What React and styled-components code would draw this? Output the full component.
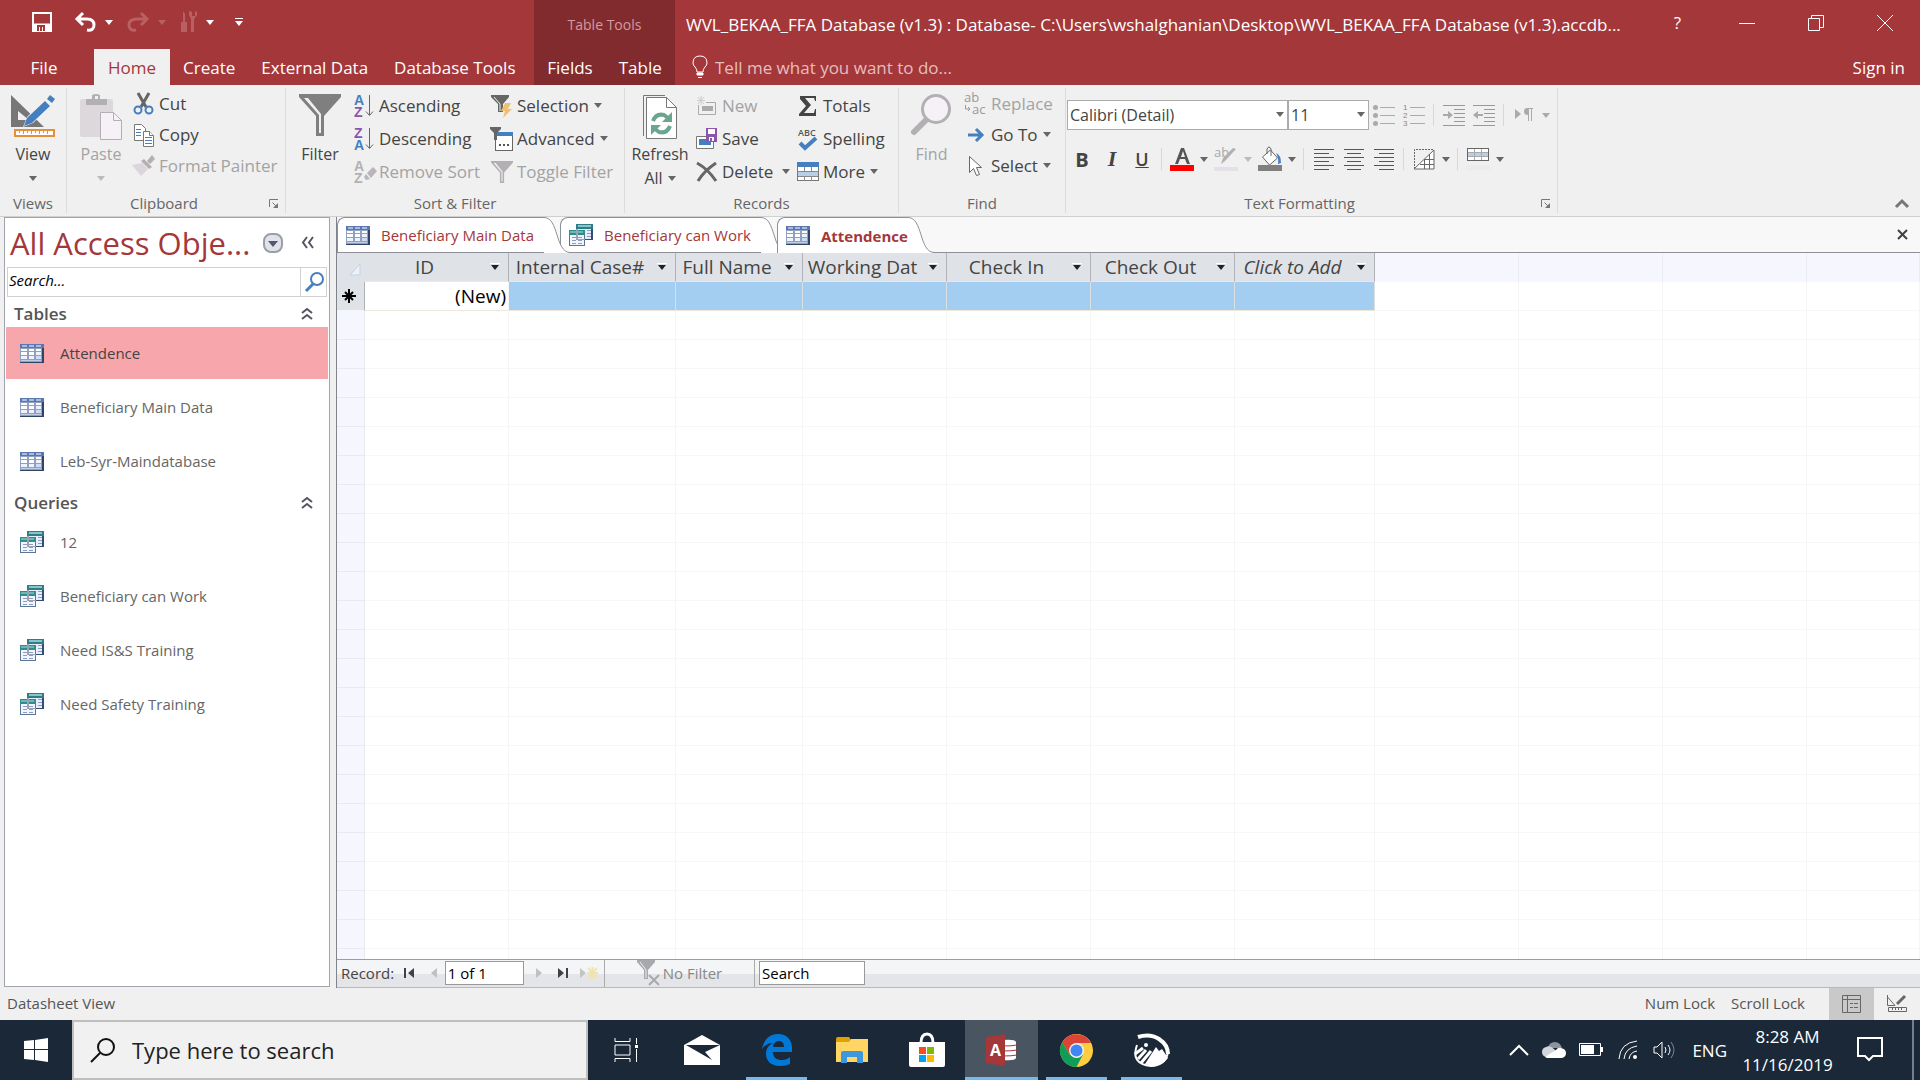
import styled, { createGlobalStyle } from "styled-components";

const GlobalStyle = createGlobalStyle`
  * {
    box-sizing: border-box;
  }
  body {
    margin: 0;
    font-family: "Open Sans", "Noto Sans", sans-serif;
    font-size: 17px;
    color: #444;
    background: #f0f0f0;
  }
  button, input, select {
    font: inherit;
    color: inherit;
  }
  button {
    background: none;
    border: 0;
    padding: 0;
    white-space: nowrap;
  }
  svg {
    display: block;
    flex: none;
    overflow: visible;
  }
`;

// DATA
const COLUMNS = [
  { name: "ID", width: 144 },
  { name: "Internal Case#", width: 167 },
  { name: "Full Name", width: 127 },
  { name: "Working Dat", width: 144 },
  { name: "Check In", width: 144 },
  { name: "Check Out", width: 144 },
  { name: "Click to Add", width: 140, italic: true },
];
const SPARE_COLUMNS = [144, 144, 144];
const EMPTY_ROWS = 40;

const TABLES = ["Attendence", "Beneficiary Main Data", "Leb-Syr-Maindatabase"];
const QUERIES = [
  "12",
  "Beneficiary can Work",
  "Need IS&S Training",
  "Need Safety Training",
];

// SMALL SHARED ICONS
const Caret = ({ color = "#666" }) => (
  <svg width="8" height="5" viewBox="0 0 8 5">
    <path d="M0 0h8L4 5z" fill={color} />
  </svg>
);

const TableIcon = () => (
  <svg width="24" height="19" viewBox="0 0 24 19">
    <rect width="24" height="19" fill="#8ea0c4" />
    <path d="M0 0h24v4H0z" fill="#5b77ad" />
    <path d="M2 1h5v2H2zM9 1h5v2H9zM16 1h5v2h-5z" fill="#a9bbdf" />
    <path d="M1 5h6v2H1zM9 5h5v2H9zM16 5h5v2h-5zM1 8h6v3H1zM9 8h5v3H9z" fill="#fff" />
    <path d="M16 8h5v3h-5zM1 12h6v3H1zM9 12h5v3H9z" fill="#eef3fc" />
    <path d="M16 12h5v3h-5z" fill="#cddcf7" />
    <path d="M1 16h20v1H1z" fill="#c2cddf" />
    <path d="M22 4h2v15H0v-1h22z" fill="#2f4468" />
  </svg>
);

const QueryIcon = () => (
  <svg width="24" height="22" viewBox="0 0 24 22">
    <rect x="7" width="17" height="16" fill="#2f4f74" />
    <rect x="7" width="17" height="5" fill="#2f7d87" />
    <rect x="9" y="1" width="13" height="2" fill="#86c6cb" />
    <rect x="8" y="5" width="14" height="10" fill="#e8eefa" />
    <path d="M18 6h4v1h-4zM18 9h4v1h-4zM18 12h4v1h-4z" fill="#8f9cc0" />
    <rect y="6" width="16" height="16" fill="#5a7697" />
    <rect y="6" width="16" height="5" fill="#2f8d8c" />
    <rect x="1" y="7" width="13" height="2" fill="#6fb5b8" />
    <rect x="1" y="11" width="14" height="10" fill="#f1f5fd" />
    <path d="M3 13h4v1H3zM9 13h4v1H9zM3 16h4v1H3zM9 16h4v1H9zM3 19h4v1H3zM9 19h4v1H9z" fill="#8f9cc0" />
    <path d="M7 5h2v10h7v1H7z" fill="#9aa3b4" />
  </svg>
);

const Launcher = () => (
  <svg width="10" height="10" viewBox="0 0 10 10" fill="none" stroke="#777">
    <path d="M.5 8V.5H9M3.500 3.500l4 4" />
    <path d="M9 4v5H4z" fill="#777" stroke="none" />
  </svg>
);

const DoubleUp = () => (
  <svg width="12" height="14" viewBox="0 0 12 14" fill="none" stroke="#54555f" strokeWidth="2">
    <path d="M1 6l5-4 5 4M1 12l5-4 5 4" />
  </svg>
);

const Funnel = ({ size = 22, color = "#666", shine = "#f0f0f0" }) => (
  <svg width={size} height={size} viewBox="0 0 42 42">
    <path d="M0 0h42v3L25 22v20h-8V22L0 3z" fill={color} />
    <path d="M5 4l15 17v18h2V20L9 4z" fill={shine} />
  </svg>
);

const Lines = ({ rows, color = "#555", children }) => (
  <svg width="22" height="22" viewBox="0 0 22 22">
    {rows.map(([x, w], i) => (
      <rect key={i} x={x} y={i * 4 + 1} width={w} height="1" fill={color} />
    ))}
    {children}
  </svg>
);

const SortIcon = ({ first, second, c1, c2, arrow }) => (
  <svg width="22" height="24" viewBox="0 0 22 24">
    <g fontFamily="Liberation Sans, sans-serif" fontSize="14" fontWeight="700">
      <text x="1" y="11" fill={c1}>{first}</text>
      <text x="1" y="23" fill={c2}>{second}</text>
    </g>
    {arrow ? (
      <path d="M16.500 1v20M13 17.500l3.500 4 3.500-4" fill="none" stroke="#666" />
    ) : (
      <path d="M14 13l6-6 4 4-6 7zM13 14l4 5-4 1-2-3z" fill="#b9b5ba" />
    )}
  </svg>
);

// RIBBON
const BigTool = ({ icon, label, second, caret, disabled, $width }) => (
  <BigButton $width={$width} disabled={disabled}>
    <BigIcon>{icon}</BigIcon>
    <BigLabel>{label}</BigLabel>
    <BigLabel>
      {second}
      {caret && <Caret color={disabled ? "#bbb" : "#666"} />}
    </BigLabel>
  </BigButton>
);

const Tool = ({ icon, label, caret, wide, disabled }) => (
  <ToolButton disabled={disabled}>
    <ToolIcon>{icon}</ToolIcon>
    {label}
    {caret && (
      <ToolCaret $wide={wide}>
        <Caret />
      </ToolCaret>
    )}
  </ToolButton>
);

const Ribbon = () => (
  <RibbonBar>
    <Group $width={67}>
      <GroupBody>
        <BigTool
          $width={66}
          label="View"
          caret
          icon={
            <svg width="44" height="44" viewBox="0 0 44 44">
              <path d="M0 1l33 32H0zM7 17v9h11z" fill="#777" fillRule="evenodd" />
              <path d="M12 33l4-10L36 3l7 6-21 20z" fill="#f0f0f0" />
              <path d="M13 32l3-8L34 7l5 5-18 17zM36 5l3-4 5 4-3 4z" fill="#447fbf" />
              <path d="M4 36h39v6H4z" fill="#fff" stroke="#e58e3c" strokeWidth="2" />
              <path d="M8.500 37v2M12.500 37v3M16.500 37v2M20.500 37v3M24.500 37v2M28.500 37v3M32.500 37v2M36.500 37v3" stroke="#e58e3c" />
            </svg>
          }
        />
      </GroupBody>
      <GroupLabel>Views</GroupLabel>
    </Group>

    <Group $width={219}>
      <GroupBody $pad={3}>
        <BigTool
          $width={62}
          label="Paste"
          caret
          disabled
          icon={
            <svg width="42" height="46" viewBox="0 0 42 46">
              <rect y="5" width="33" height="38" rx="2" fill="#dcd8dc" />
              <path d="M6 5h6V1q4-2 8 0v4h7v6H6z" fill="#b3b0b3" />
              <path d="M15 2h3v3h-3z" fill="#f0f0f0" />
              <path d="M20.500 18.500h13l8 8v19h-21z" fill="#f6f1f7" stroke="#b3b0b3" />
              <path d="M33.500 18.500v8h8" fill="none" stroke="#b3b0b3" />
            </svg>
          }
        />
        <Stack $row={31} $width={150}>
          <Tool
            label="Cut"
            icon={
              <svg width="22" height="24" viewBox="0 0 22 24" fill="none">
                <path d="M5 1l8 14M16 1L8 15" stroke="#666" strokeWidth="3" />
                <circle cx="5" cy="18" r="3.500" stroke="#447fbf" strokeWidth="2" />
                <circle cx="16" cy="18" r="3.500" stroke="#447fbf" strokeWidth="2" />
              </svg>
            }
          />
          <Tool
            label="Copy"
            icon={
              <svg width="22" height="24" viewBox="0 0 22 24" fill="#fff" stroke="#777">
                <path d="M1.500 1.500h7l4 4v12h-11z" />
                <path d="M3 6.500h5M3 9.500h5M3 12.500h5" stroke="#447fbf" />
                <path d="M10.500 8.500h6l4 4v11h-10z" />
                <path d="M16.500 8.500v4h4" />
                <path d="M12 14.500h7M12 17.500h7M12 20.500h7" stroke="#447fbf" />
              </svg>
            }
          />
          <Tool
            label="Format Painter"
            disabled
            icon={
              <svg width="24" height="22" viewBox="0 0 24 22">
                <path d="M0 10l10-2 6 6-7 7z" fill="#dcd6dc" />
                <path d="M9 6l3-2 8 8-3 2zM15 6l5-6 3 4-5 5z" fill="#b3b0b3" />
              </svg>
            }
          />
        </Stack>
      </GroupBody>
      <GroupLabel $launch>
        Clipboard
        <LaunchButton aria-label="Clipboard options"><Launcher /></LaunchButton>
      </GroupLabel>
    </Group>

    <Group $width={339}>
      <GroupBody $pad={2}>
        <BigTool $width={64} label="Filter" icon={<Funnel size={42} color="#7f7f7f" />} />
        <Stack $row={33} $width={138}>
          <Tool label="Ascending" icon={<SortIcon first="A" second="Z" c1="#447fbf" c2="#8a56ab" arrow />} />
          <Tool label="Descending" icon={<SortIcon first="Z" second="A" c1="#8a56ab" c2="#447fbf" arrow />} />
          <Tool label="Remove Sort" disabled icon={<SortIcon first="A" second="Z" c1="#b3b0b3" c2="#b3b0b3" />} />
        </Stack>
        <Stack $row={33} $width={130}>
          <Tool
            label="Selection"
            caret
            icon={
              <svg width="22" height="24" viewBox="0 0 22 24">
                <path d="M0 1h18v2l-6 7v8H7v-8L0 3z" fill="#666" />
                <path d="M3 3l6 7v7" stroke="#f0f0f0" fill="none" />
                <path d="M14 9h6l-3 6h4l-9 9 2-7h-4z" fill="#f0c070" />
              </svg>
            }
          />
          <Tool
            label="Advanced"
            caret
            icon={
              <svg width="24" height="24" viewBox="0 0 24 24">
                <rect x="5.500" y="6.500" width="17" height="17" fill="#fff" stroke="#666" />
                <path d="M6 5h17v4H6z" fill="#447fbf" />
                <path d="M0 0h11v2L7 6v7H4V6L0 2z" fill="#666" />
                <path d="M9 17h2v2H9zM13 17h2v2h-2zM17 17h2v2h-2z" fill="#555" />
              </svg>
            }
          />
          <Tool label="Toggle Filter" disabled icon={<Funnel color="#b3b0b3" />} />
        </Stack>
      </GroupBody>
      <GroupLabel>Sort &amp; Filter</GroupLabel>
    </Group>

    <Group $width={274}>
      <GroupBody>
        <BigTool
          $width={70}
          label="Refresh"
          second="All"
          caret
          icon={
            <svg width="34" height="46" viewBox="0 0 34 46">
              <path d="M.5 42V1.500H22" fill="none" stroke="#777" />
              <path d="M3.500 3.500h20l10 10v31h-30z" fill="#fff" stroke="#777" />
              <path d="M23.500 3.500v10h10" fill="none" stroke="#777" />
              <path d="M10 27q3-8 11-6l4 3" fill="none" stroke="#6aa68f" strokeWidth="4" />
              <path d="M29 18v10H19z" fill="#6aa68f" />
              <path d="M27 32q-3 8-11 6l-4-3" fill="none" stroke="#6aa68f" strokeWidth="4" />
              <path d="M8 41V31h10z" fill="#6aa68f" />
            </svg>
          }
        />
        <Stack $row={33} $width={101}>
          <Tool
            label="New"
            disabled
            icon={
              <svg width="22" height="20" viewBox="0 0 22 20">
                <path d="M2.500 9v9.500h17v-12H10" fill="none" stroke="#aaa" />
                <path d="M6 10h11v5H6z" fill="#aaa" />
                <path d="M5 0v9M1 4.500h8M2 1l6 7M8 1L2 8" stroke="#ccc" />
              </svg>
            }
          />
          <Tool
            label="Save"
            icon={
              <svg width="24" height="24" viewBox="0 0 24 24">
                <path d="M1.500 9.500h17v12h-17z" fill="#fff" stroke="#777" />
                <path d="M4 12h12v6H4z" fill="#447fbf" />
                <path d="M11 1h11v14H11z" fill="#8a56ab" />
                <path d="M13 2h7v5h-7zM14 10h5v4h-5z" fill="#fff" />
                <path d="M15 11h2v3h-2z" fill="#8a56ab" />
              </svg>
            }
          />
          <Tool
            label="Delete"
            caret
            wide
            icon={
              <svg width="22" height="20" viewBox="0 0 22 20" fill="none" stroke="#666" strokeWidth="3">
                <path d="M1 1q11 6 19 18M20 1Q8 9 2 19" />
              </svg>
            }
          />
        </Stack>
        <Stack $row={33} $width={98}>
          <Tool
            label="Totals"
            icon={
              <svg width="20" height="20" viewBox="0 0 20 20">
                <path d="M2 0h16v5h-1l-1-3H7l6 7-7 8h10l1-4h1v7H1v-2l7-8-6-7z" fill="#444" />
              </svg>
            }
          />
          <Tool
            label="Spelling"
            icon={
              <svg width="22" height="24" viewBox="0 0 22 24">
                <text x="1" y="9" fontSize="9" fontWeight="600" fill="#555">ABC</text>
                <path d="M3 16l5 5L19 11" fill="none" stroke="#447fbf" strokeWidth="4" />
              </svg>
            }
          />
          <Tool
            label="More"
            icon={
              <svg width="22" height="20" viewBox="0 0 22 20">
                <rect x=".5" y=".5" width="21" height="18" fill="#fff" stroke="#777" />
                <path d="M0 0h22v5H0z" fill="#447fbf" />
                <path d="M1 9h20v5H1z" fill="#b9cfe8" />
                <path d="M7.500 5v4M14.500 5v4M7.500 14v5M14.500 14v5M1 9.500h20M1 14.500h20" stroke="#888" />
              </svg>
            }
            caret
          />
        </Stack>
      </GroupBody>
      <GroupLabel>Records</GroupLabel>
    </Group>

    <Group $width={167}>
      <GroupBody>
        <BigTool
          $width={65}
          label="Find"
          disabled
          icon={
            <svg width="42" height="42" viewBox="0 0 42 42">
              <path d="M3 38l13-13" stroke="#b3b0b3" strokeWidth="6" strokeLinecap="round" />
              <circle cx="25" cy="15" r="13.500" fill="#f6f1f7" stroke="#b3b0b3" strokeWidth="3" />
            </svg>
          }
        />
        <Stack $row={31} $width={100}>
          <Tool
            label="Replace"
            disabled
            icon={
              <svg width="24" height="24" viewBox="0 0 24 24">
                <text x="0" y="10" fontSize="13" fill="#999">ab</text>
                <text x="8" y="22" fontSize="13" fill="#999">ac</text>
                <path d="M1.500 13v4h4M4 15l2 2-2 2" fill="none" stroke="#999" />
              </svg>
            }
          />
          <Tool
            label="Go To"
            caret
            icon={
              <svg width="18" height="14" viewBox="0 0 18 14" fill="none" stroke="#447fbf" strokeWidth="3">
                <path d="M1 7h13M9 1l6 6-6 6" />
              </svg>
            }
          />
          <Tool
            label="Select"
            caret
            icon={
              <svg width="16" height="22" viewBox="0 0 16 22">
                <path d="M1.500 1.500v16l4-4 3 7 3-1-3-7h5z" fill="#fff" stroke="#666" />
              </svg>
            }
          />
        </Stack>
      </GroupBody>
      <GroupLabel>Find</GroupLabel>
    </Group>

    <Group $width={492}>
      <FormatBody>
        <FormatRow>
          <SelectBox $width={221}>
            <select aria-label="Font" defaultValue="Calibri (Detail)"><option>Calibri (Detail)</option></select>
            <SelectArrow><Caret /></SelectArrow>
          </SelectBox>
          <SelectBox $width={81}>
            <select aria-label="Font size" defaultValue="11"><option>11</option></select>
            <SelectArrow><Caret /></SelectArrow>
          </SelectBox>
          <IconButton aria-label="Bullets">
            <Lines rows={[]}>
              <path d="M7 3h15v1H7zM7 11h15v1H7zM7 19h15v1H7z" fill="#aaa" />
              <g fill="#aaa"><circle cx="2.500" cy="3.500" r="2.500" /><circle cx="2.500" cy="11.500" r="2.500" /><circle cx="2.500" cy="19.500" r="2.500" /></g>
            </Lines>
          </IconButton>
          <IconButton aria-label="Numbering">
            <Lines rows={[]}>
              <path d="M7 3h15v1H7zM7 11h15v1H7zM7 19h15v1H7z" fill="#aaa" />
              <g fontFamily="Liberation Sans, sans-serif" fontSize="8" fill="#888"><text x="0" y="6">1</text><text x="0" y="14">2</text><text x="0" y="22">3</text></g>
            </Lines>
          </IconButton>
          <Divider />
          <IconButton aria-label="Increase indent">
            <Lines rows={[[0, 22], [11, 11], [11, 11], [11, 11], [11, 11], [0, 22]]} color="#999">
              <path d="M0 10h5V7l5 4-5 4v-3H0z" fill="#aaa" />
            </Lines>
          </IconButton>
          <IconButton aria-label="Decrease indent">
            <Lines rows={[[0, 22], [11, 11], [11, 11], [11, 11], [11, 11], [0, 22]]} color="#999">
              <path d="M10 10H5V7l-5 4 5 4v-3h5z" fill="#aaa" />
            </Lines>
          </IconButton>
          <Divider />
          <IconButton aria-label="Text direction">
            <svg width="18" height="14" viewBox="0 0 18 14" fill="#aaa">
              <path d="M0 1l6 5-6 5zM12 0h6v1h-1v12h-1V1h-2v12h-1V7q-4 0-4-3.500T12 0z" />
            </svg>
          </IconButton>
          <CaretButton aria-label="Text direction menu"><Caret color="#aaa" /></CaretButton>
        </FormatRow>
        <FormatRow>
          <IconButton><b>B</b></IconButton>
          <IconButton><i>I</i></IconButton>
          <IconButton><u>U</u></IconButton>
          <Divider />
          <IconButton aria-label="Font color">
            <svg width="24" height="26" viewBox="0 0 24 26">
              <path d="M5 18l6-16h3l6 16h-3l-2-5H10l-2 5zM11 11h4l-2-6z" fill="#555" fillRule="evenodd" />
              <path d="M0 19h24v6H0z" fill="#f00" />
            </svg>
          </IconButton>
          <CaretButton aria-label="Font color menu"><Caret /></CaretButton>
          <IconButton aria-label="Highlight">
            <svg width="24" height="26" viewBox="0 0 24 26">
              <text x="0" y="11" fontSize="13" fill="#aaa">ab</text>
              <path d="M22 3L11 15l-4 3 2-6L19 2z" fill="#b3b0b3" />
              <path d="M0 21h24v4H0z" fill="#e5dfe7" />
            </svg>
          </IconButton>
          <CaretButton aria-label="Highlight menu"><Caret color="#bbb" /></CaretButton>
          <IconButton aria-label="Fill color">
            <svg width="24" height="26" viewBox="0 0 24 26">
              <path d="M4.500 11l8-7 7 8-8 7z" fill="#fff" stroke="#666" />
              <path d="M9 8V3q2-4 4 0v7" fill="none" stroke="#666" />
              <path d="M18 7q5 2 5 10l-3 1q1-5-2-11z" fill="#447fbf" />
              <path d="M0 19h24v6H0z" fill="#808080" />
            </svg>
          </IconButton>
          <CaretButton aria-label="Fill color menu"><Caret /></CaretButton>
          <Divider />
          <IconButton aria-label="Align left"><Lines rows={[[1, 20], [1, 15], [1, 20], [1, 15], [1, 20], [1, 15]]} /></IconButton>
          <IconButton aria-label="Center"><Lines rows={[[1, 20], [4, 14], [1, 20], [4, 14], [1, 20], [4, 14]]} /></IconButton>
          <IconButton aria-label="Align right"><Lines rows={[[1, 20], [6, 15], [1, 20], [6, 15], [1, 20], [6, 15]]} /></IconButton>
          <Divider />
          <IconButton aria-label="Gridlines">
            <svg width="22" height="22" viewBox="0 0 22 22" fill="none" stroke="#666">
              <path d="M1.500 21V1.500H21" strokeDasharray="2 1" />
              <path d="M1 21L21 2v19z" fill="#fff" />
              <path d="M16.500 6v15M11.500 11v10M12 11.500h9M7 16.500h14" />
            </svg>
          </IconButton>
          <CaretButton aria-label="Gridlines menu"><Caret /></CaretButton>
          <Divider />
          <IconButton aria-label="Alternate row color">
            <svg width="24" height="24" viewBox="0 0 24 24">
              <rect x="1.500" y="1.500" width="21" height="12" fill="#fff" stroke="#666" />
              <path d="M2 5h20v4H2z" fill="#b9cfe8" />
              <path d="M8.500 2v11M15.500 2v11M2 5.500h20M2 9.500h20" stroke="#aaa" />
              <path d="M0 18h24v5H0z" fill="#ececec" />
            </svg>
          </IconButton>
          <CaretButton aria-label="Alternate row color menu"><Caret /></CaretButton>
        </FormatRow>
      </FormatBody>
      <GroupLabel $launch>
        Text Formatting
        <LaunchButton aria-label="Text formatting options"><Launcher /></LaunchButton>
      </GroupLabel>
    </Group>
    <CollapseButton aria-label="Collapse the ribbon">
      <svg width="14" height="10" viewBox="0 0 14 10" fill="none" stroke="#777" strokeWidth="3">
        <path d="M1 8l6-6 6 6" />
      </svg>
    </CollapseButton>
  </RibbonBar>
);

const TopBar = () => (
  <Header>
    <QuickAccess>
      <button aria-label="Save">
        <svg width="20" height="20" viewBox="0 0 20 20" fill="none" stroke="#fff">
          <path d="M1 1h18v18H1z" strokeWidth="2" />
          <path d="M1 12h18v7H1z" fill="#fff" />
          <path d="M5 13h8v6H5z" fill="#a4373a" stroke="none" />
          <path d="M7 15h4v4H7z" fill="#fff" stroke="none" />
          <path d="M8 15h2v4H8z" fill="#a4373a" stroke="none" />
        </svg>
      </button>
      <button aria-label="Undo">
        <svg width="23" height="20" viewBox="0 0 23 20" fill="none" stroke="#fff" strokeWidth="3">
          <path d="M9 1L3 7l6 6M3 7h10q7 0 7 6t-7 5" />
        </svg>
      </button>
      <CaretButton aria-label="Undo history"><Caret color="#fff" /></CaretButton>
      <button aria-label="Redo">
        <svg width="23" height="20" viewBox="0 0 23 20" fill="none" stroke="#b96062" strokeWidth="3">
          <path d="M14 1l6 6-6 6M20 7H10q-8 0-8 6t7 5" />
        </svg>
      </button>
      <CaretButton aria-label="Redo history"><Caret color="#b96062" /></CaretButton>
      <button aria-label="Tools">
        <svg width="18" height="22" viewBox="0 0 18 22" fill="#b96062">
          <path d="M3 0l2 3v8h2v10H1V11h2V3zM9 0v4l2 4v13h3V8l3-4V0l-2 1v4h-3V1z" />
        </svg>
      </button>
      <CaretButton aria-label="Tools menu"><Caret color="#fff" /></CaretButton>
      <button aria-label="Customize toolbar">
        <svg width="8" height="8" viewBox="0 0 8 8" fill="#fff">
          <path d="M0 0h8v1H0zM0 3h8L4 8z" />
        </svg>
      </button>
    </QuickAccess>
    <ContextTitle>Table Tools</ContextTitle>
    <WindowTitle>
      WVL_BEKAA_FFA Database (v1.3) : Database- C:\Users\wshalghanian\Desktop\WVL_BEKAA_FFA Database (v1.3).accdb...
    </WindowTitle>
    <WindowButtons>
      <button aria-label="Help">?</button>
      <button aria-label="Minimize">
        <svg width="16" height="16" viewBox="0 0 16 16"><path d="M0 8.500h16" stroke="#fff" /></svg>
      </button>
      <button aria-label="Restore">
        <svg width="16" height="16" viewBox="0 0 16 16" fill="none" stroke="#fff">
          <path d="M.5 3.500h11v12H.5zM3.500 3V.5h12v12H12" />
        </svg>
      </button>
      <button aria-label="Close">
        <svg width="16" height="16" viewBox="0 0 16 16"><path d="M0 0l16 16M16 0L0 16" stroke="#fff" /></svg>
      </button>
    </WindowButtons>

    <Tabs>
      <FileTab>File</FileTab>
      <Tab $active>Home</Tab>
      <Tab>Create</Tab>
      <Tab>External Data</Tab>
      <Tab>Database Tools</Tab>
    </Tabs>
    <ContextTabs>
      <Tab>Fields</Tab>
      <Tab>Table</Tab>
    </ContextTabs>
    <TellMe>
      <svg width="17" height="24" viewBox="0 0 17 24" fill="none" stroke="#fff">
        <path d="M5 17q0-3-2-5Q1 10 1 8q0-7 7-7t7 7q0 2-2 4t-2 5z" />
        <path d="M5 18h6v2H5zM6 22.500h4" fill="#fff" />
      </svg>
      <input aria-label="Tell me" placeholder="Tell me what you want to do..." />
    </TellMe>
    <SignIn>Sign in</SignIn>
  </Header>
);

// NAVIGATION PANE
const NavSection = ({ title, items, icon, selected }) => (
  <section>
    <SectionHead>
      {title}
      <button aria-label={`Collapse ${title}`}><DoubleUp /></button>
    </SectionHead>
    {items.map((item) => (
      <NavItem key={item} $selected={item === selected}>
        {icon}
        {item}
      </NavItem>
    ))}
  </section>
);

const NavPane = () => (
  <Pane>
    <PaneHead>
      <h1>All Access Obje...</h1>
      <button aria-label="Choose category">
        <svg width="20" height="20" viewBox="0 0 20 20">
          <rect x="1" y="1" width="18" height="18" rx="7" fill="#dfe3ea" stroke="#9b9ea6" strokeWidth="2" />
          <path d="M5 8h10l-5 6z" fill="#5b5470" />
        </svg>
      </button>
      <button aria-label="Hide pane">
        <svg width="14" height="13" viewBox="0 0 14 13" fill="none" stroke="#54555f" strokeWidth="2">
          <path d="M6 1L2 6.500 6 12M12 1L8 6.500l4 5.500" />
        </svg>
      </button>
    </PaneHead>
    <PaneSearch>
      <input aria-label="Search objects" placeholder="Search..." />
      <button aria-label="Search">
        <svg width="20" height="20" viewBox="0 0 20 20" fill="none" stroke="#447fbf">
          <circle cx="12" cy="7" r="6" strokeWidth="2" />
          <path d="M8 12l-7 7" strokeWidth="3" />
        </svg>
      </button>
    </PaneSearch>
    <NavSection title="Tables" items={TABLES} icon={<TableIcon />} selected="Attendence" />
    <NavSection title="Queries" items={QUERIES} icon={<QueryIcon />} />
  </Pane>
);

// DOCUMENT AREA
const DocTab = ({ icon, label, active, order }) => (
  <DocTabWrap $order={order}>
    <DocTabBody $active={active}>
      {icon}
      {label}
    </DocTabBody>
    <svg width="26" height="36" viewBox="0 0 26 36">
      <path d="M0 .5C15 .5 11 35.500 26 35.500V36H0z" fill="#fff" />
      <path d="M0 .5C15 .5 11 35 26 35.500" fill="none" stroke="#8b9199" />
    </svg>
  </DocTabWrap>
);

const Datasheet = () => (
  <SheetWrap>
    <Sheet>
      <colgroup>
        <col style={{ width: 28 }} />
        {COLUMNS.map((c) => (
          <col key={c.name} style={{ width: c.width }} />
        ))}
        {SPARE_COLUMNS.map((w, i) => (
          <col key={i} style={{ width: w }} />
        ))}
        <col />
      </colgroup>
      <thead>
        <tr>
          <CornerCell>
            <svg width="24" height="20" viewBox="0 0 24 20">
              <path d="M13 18L23 7v11z" fill="#eef1f6" stroke="#c3d2e4" />
            </svg>
          </CornerCell>
          {COLUMNS.map((c) => (
            <HeadCell key={c.name} $italic={c.italic}>
              <HeadInner>
                <span>{c.name}</span>
                <button aria-label={`${c.name} menu`}>
                  <svg width="10" height="8" viewBox="0 0 10 8">
                    <path d="M0 0h10v1H0z" fill="#fff" />
                    <path d="M1 2h8L5 7z" fill="#222" />
                  </svg>
                </button>
              </HeadInner>
            </HeadCell>
          ))}
          <SpareHead />
          <SpareHead />
          <SpareHead />
          <SpareHead />
        </tr>
      </thead>
      <tbody>
        <tr>
          <NewMark>
            <svg width="26" height="16" viewBox="0 0 26 16" stroke="#000" strokeWidth="2">
              <path d="M12 1v14M5 8h14M8 4l8 8M16 4l-8 8" />
            </svg>
          </NewMark>
          <NewId>(New)</NewId>
          {COLUMNS.slice(1).map((c) => (
            <BlueCell key={c.name} />
          ))}
          <td />
          <td />
          <td />
          <td />
        </tr>
        {Array.from({ length: EMPTY_ROWS }, (_, r) => (
          <tr key={r}>
            <RowMark />
            {Array.from({ length: 11 }, (_, c) => (
              <td key={c} />
            ))}
          </tr>
        ))}
      </tbody>
    </Sheet>
  </SheetWrap>
);

const RecordNav = () => (
  <RecordBar>
    <RecordPart $width={268}>
      Record:
      <NavArrow $width={30} aria-label="First record">
        <svg width="10" height="10" viewBox="0 0 10 10" fill="#3f4147"><path d="M0 0h2v10H0zM10 0v10L4 5z" /></svg>
      </NavArrow>
      <NavArrow $width={21} aria-label="Previous record">
        <svg width="6" height="10" viewBox="0 0 6 10" fill="#bfc0c4"><path d="M6 0v10L0 5z" /></svg>
      </NavArrow>
      <RecordInput $width={79} aria-label="Current record" defaultValue="1 of 1" />
      <NavArrow $width={30} aria-label="Next record">
        <svg width="6" height="10" viewBox="0 0 6 10" fill="#bfc0c4"><path d="M0 0l6 5-6 5z" /></svg>
      </NavArrow>
      <NavArrow $width={20} aria-label="Last record">
        <svg width="10" height="10" viewBox="0 0 10 10" fill="#3f4147"><path d="M8 0h2v10H8zM0 0l6 5-6 5z" /></svg>
      </NavArrow>
      <NavArrow $width={31} aria-label="New record">
        <svg width="18" height="12" viewBox="0 0 18 12">
          <path d="M0 1l6 5-6 5z" fill="#c4c4c6" />
          <path d="M12.500 0v12M7 6h11M8 1l9 10M17 1L8 11" stroke="#f0e4ae" strokeWidth="2" />
        </svg>
      </NavArrow>
    </RecordPart>
    <FilterPart>
      <svg width="23" height="26" viewBox="0 0 23 26">
        <path d="M0 0h18v2l-7 8v9H7v-9L0 2z" fill="#a9a9ad" />
        <path d="M3 2l6 8v8" fill="none" stroke="#eee" />
        <path d="M12 15l10 10M22 15L12 25" stroke="#a9a9ad" strokeWidth="2" />
      </svg>
      No Filter
    </FilterPart>
    <SearchPart>
      <RecordInput $width={106} aria-label="Search records" defaultValue="Search" />
    </SearchPart>
  </RecordBar>
);

// TASKBAR
const Taskbar = () => (
  <TaskRow>
    <StartButton aria-label="Start">
      <svg width="24" height="24" viewBox="0 0 24 24" fill="#fff">
        <path d="M0 3l10-1v9H0zM11 2l13-2v11H11zM0 12h10v10L0 21zM11 12h13v12l-13-2z" />
      </svg>
    </StartButton>
    <TaskSearch>
      <svg width="25" height="25" viewBox="0 0 25 25" fill="none" stroke="#111" strokeWidth="2">
        <circle cx="16" cy="9" r="8" />
        <path d="M10 15l-9 9" />
      </svg>
      <input aria-label="Type here to search" placeholder="Type here to search" />
    </TaskSearch>
    <TaskButton aria-label="Task view">
      <svg width="25" height="24" viewBox="0 0 25 24" fill="none" stroke="#fff">
        <path d="M1 0v3.500h15V0M1 24v-3.500h15V24M1 7h15v10H1zM22.500 0v6M22.500 11v13" />
        <path d="M21 7h3v3h-3z" fill="#fff" stroke="none" />
      </svg>
    </TaskButton>
    <TaskButton aria-label="Mail">
      <svg width="36" height="30" viewBox="0 0 36 30">
        <path d="M0 10L18 0l18 10v20H0z" fill="#fff" />
        <path d="M2 10h34L21 17l7 8z" fill="#1a2838" />
      </svg>
    </TaskButton>
    <TaskButton $open aria-label="Edge">
      <svg width="32" height="32" viewBox="0 0 32 32">
        <path d="M1 15C3 5 9 0 17 0c9 0 14 6 14 14v4H12c0 6 4 8 9 8 3 0 6-1 8-3v7c-3 1-6 2-10 2C10 32 5 27 5 20c0-6 3-9 7-11-5 0-9 3-11 6zm11-2h11c0-4-2-6-5-6s-6 3-6 6z" fill="#0078d7" />
      </svg>
    </TaskButton>
    <TaskButton aria-label="File Explorer">
      <svg width="32" height="26" viewBox="0 0 32 26">
        <path d="M0 2q0-2 2-2h11l2 3v4H0z" fill="#dfa000" />
        <path d="M0 5h13l2-3h17v23H0z" fill="#ffd564" />
        <path d="M5 26V16q0-2 2-2h18q2 0 2 2v10h-6v-6H11v6z" fill="#3d97de" />
      </svg>
    </TaskButton>
    <TaskButton aria-label="Store">
      <svg width="36" height="34" viewBox="0 0 36 34">
        <path d="M12 10q0-9 6-9t6 9" fill="none" stroke="#fff" strokeWidth="3" />
        <path d="M0 9h36v23q0 2-2 2H2q-2 0-2-2z" fill="#fff" />
        <path d="M10 14h7v7h-7z" fill="#f25022" />
        <path d="M18 14h7v7h-7z" fill="#7fba00" />
        <path d="M10 22h7v7h-7z" fill="#00a4ef" />
        <path d="M18 22h7v7h-7z" fill="#ffb900" />
      </svg>
    </TaskButton>
    <TaskButton $open $current aria-label="Access">
      <svg width="32" height="32" viewBox="0 0 32 32">
        <path d="M17 6q12-1 13 2v16q-1 3-13 2z" fill="#fff" />
        <path d="M17 12q9 0 14-1M17 17q9 0 14-1M17 22q9 0 14-1" stroke="#a4373a" strokeWidth="1" fill="none" />
        <path d="M0 3l19-3v32L0 29z" fill="#a4373a" />
        <text x="4" y="22" fontSize="16" fontWeight="700" fill="#fff">A</text>
      </svg>
    </TaskButton>
    <TaskButton $open aria-label="Chrome">
      <svg width="33" height="33" viewBox="0 0 33 33">
        <circle cx="16.500" cy="16.500" r="16.500" fill="#ffcd40" />
        <path d="M2.200 8.200A16.500 16.500 0 0 1 31 9H16.500l-7 11.500z" fill="#db4437" />
        <path d="M2.200 8.200A16.500 16.500 0 0 0 16.500 33l6.500-12.500-13.500 0z" fill="#0f9d58" />
        <circle cx="16.500" cy="16.500" r="7.500" fill="#f1f1f1" />
        <circle cx="16.500" cy="16.500" r="6" fill="#4285f4" />
      </svg>
    </TaskButton>
    <TaskButton $open aria-label="Photos">
      <svg width="37" height="33" viewBox="0 0 37 33">
        <path d="M5 3q12-4 21 2t9 15" fill="none" stroke="#fff" strokeWidth="4" />
        <path d="M4 11q-7 19 14 21 15-1 17-14" fill="none" stroke="#fff" strokeWidth="2" />
        <path d="M12 30l11-17 3 4 3-2 6 9q-6 8-17 8z" fill="#fff" />
        <path d="M2 20l8-6M5 25l8-9M8 29l10-12" stroke="#fff" strokeWidth="3" />
        <circle cx="13" cy="11" r="2" fill="#fff" />
      </svg>
    </TaskButton>
    <Tray>
      <svg width="20" height="12" viewBox="0 0 20 12" fill="none" stroke="#fff" strokeWidth="2">
        <path d="M1 11l9-9 9 9" />
      </svg>
      <svg width="24" height="16" viewBox="0 0 24 16">
        <path d="M6 6q1-6 7-6 5 0 7 6z" fill="#8b939c" />
        <path d="M4 15Q0 14 0 10t4-5q4-2 8 2l8 8z" fill="#d3d6d9" />
        <path d="M3 15l11-7q2-3 5-2 5 1 5 5 0 4-4 5H5z" fill="#fff" />
      </svg>
      <svg width="24" height="14" viewBox="0 0 24 14">
        <path d="M.5.5h21v12H.5z" fill="none" stroke="#fff" />
        <path d="M2 2h13v9H2zM22 4h2v5h-2z" fill="#fff" />
      </svg>
      <svg width="20" height="20" viewBox="0 0 20 20" fill="none" stroke="#fff">
        <path d="M1 19Q2 3 19 1M6 19Q7 8 19 6M11 19q1-7 8-8" />
        <circle cx="17" cy="17" r="2" fill="#fff" stroke="none" />
      </svg>
      <svg width="23" height="20" viewBox="0 0 23 20" fill="none" stroke="#fff">
        <path d="M1 7h3l5-5v16l-5-5H1z" />
        <path d="M12 7q2 3 0 6M15 5q4 5 0 10" />
        <path d="M18 2q6 8 0 16" stroke="#7c858f" />
      </svg>
      <Lang>ENG</Lang>
      <Clock>
        <span>8:28 AM</span>
        <span>11/16/2019</span>
      </Clock>
      <svg width="26" height="26" viewBox="0 0 26 26" fill="none" stroke="#fff" strokeWidth="2">
        <path d="M1 1h24v18H16l-4 4-4-4H1z" />
      </svg>
      <ShowDesktop aria-label="Show desktop" />
    </Tray>
  </TaskRow>
);

const App = () => (
  <Window>
    <GlobalStyle />
    <TopBar />
    <Ribbon />
    <Main>
      <NavPane />
      <Document>
        <DocTabs>
          <DocTab order={2} icon={<TableIcon />} label="Beneficiary Main Data" />
          <DocTab order={1} icon={<QueryIcon />} label="Beneficiary can Work" />
          <DocTab order={3} icon={<TableIcon />} label="Attendence" active />
          <CloseDoc aria-label="Close Attendence">
            <svg width="11" height="11" viewBox="0 0 11 11" stroke="#3f3f48" strokeWidth="2">
              <path d="M1 1l9 9M10 1l-9 9" />
            </svg>
          </CloseDoc>
        </DocTabs>
        <Datasheet />
        <RecordNav />
      </Document>
    </Main>
    <StatusBar>
      <StatusText>Datasheet View</StatusText>
      <StatusLocks>
        <StatusText>Num Lock</StatusText>
        <StatusText>Scroll Lock</StatusText>
      </StatusLocks>
      <ViewButton $active aria-label="Datasheet view">
        <svg width="19" height="18" viewBox="0 0 19 18" fill="none" stroke="#666">
          <path d="M.5.5h18v17H.5zM.5 4.500h18M5.500.5v17M8 8.500h3M12 8.500h4M8 12.500h3M12 12.500h4" />
        </svg>
      </ViewButton>
      <ViewButton aria-label="Design view">
        <svg width="20" height="18" viewBox="0 0 20 18" fill="none" stroke="#666">
          <path d="M.5 0v10.500H8L.5 2M1.500 12.500h18v4h-18zM5.500 13v2M8.500 13v2M11.500 13v2M14.500 13v2" />
          <path d="M18 1l-8 8" strokeWidth="3" />
        </svg>
      </ViewButton>
    </StatusBar>
    <Taskbar />
  </Window>
);

export default App;

const Window = styled.div`
  display: flex;
  flex-direction: column;
  height: 100vh;
  overflow: hidden;
`;

const Header = styled.header`
  display: grid;
  grid-template-columns: 534px 141px 1fr auto;
  grid-template-rows: 49px 36px;
  background: #a4373a;
  color: #fff;
`;
const QuickAccess = styled.div`
  display: flex;
  align-items: center;
  gap: 5px;
  padding-left: 32px;
  padding-bottom: 5px;

  button:nth-child(2) {
    margin-left: 17px;
  }
  button:nth-child(4),
  button:nth-child(6) {
    margin-left: 6px;
  }
  button:nth-child(8) {
    margin-left: 13px;
  }
`;
const ContextTitle = styled.div`
  display: flex;
  align-items: center;
  justify-content: center;
  background: #822b2f;
  color: #d29b9d;
  font-size: 14px;
`;
const WindowTitle = styled.div`
  padding-left: 11px;
  line-height: 49px;
  white-space: nowrap;
  overflow: hidden;
`;
const WindowButtons = styled.div`
  display: flex;
  padding: 0 1px 4px 0;

  button {
    display: flex;
    align-items: center;
    justify-content: center;
    width: 69px;
  }
`;
const Tabs = styled.nav`
  display: flex;
`;
const Tab = styled.button`
  padding: 0 ${(p) => (p.$active ? 14 : 13)}px;
  background: ${(p) => (p.$active ? "#f0f0f0" : "none")};
  color: ${(p) => (p.$active ? "#a4373a" : "#fff")};
`;
const FileTab = styled(Tab)`
  width: 88px;
  margin-right: 6px;
`;
const ContextTabs = styled(Tabs)`
  justify-content: center;
  background: #822b2f;
`;
const TellMe = styled.label`
  display: flex;
  align-items: center;
  gap: 6px;
  padding-left: 17px;

  input {
    flex: 1;
    padding: 0;
    background: none;
    border: 0;
  }
  input::placeholder {
    color: #e5bfc0;
    opacity: 1;
  }
`;
const SignIn = styled.button`
  justify-self: end;
  padding-right: 15px;
`;

const RibbonBar = styled.div`
  display: flex;
  flex: none;
  height: 132px;
  background: #f0f0f0;
  border-bottom: 1px solid #d0d0d0;
`;
const Group = styled.div`
  display: flex;
  flex-direction: column;
  width: ${(p) => p.$width}px;
  margin: 3px 0;
  border-right: 1px solid #dcdcdc;
`;
const GroupBody = styled.div`
  display: flex;
  flex: 1;
  padding-left: ${(p) => p.$pad || 0}px;
`;
const GroupLabel = styled.div`
  display: flex;
  align-items: center;
  justify-content: center;
  position: relative;
  height: 20px;
  padding-right: ${(p) => (p.$launch ? 24 : 0)}px;
  font-size: 15px;
  color: #666;
`;
const LaunchButton = styled.button`
  position: absolute;
  right: 6px;
  bottom: 4px;
`;
const BigButton = styled.button`
  display: flex;
  flex-direction: column;
  align-items: center;
  width: ${(p) => p.$width}px;
  padding-top: 5px;
  font-size: 16px;
  color: ${(p) => (p.disabled ? "#a3a3a3" : "#444")};
`;
const BigIcon = styled.span`
  display: flex;
  height: 49px;
  padding-top: 1px;
`;
const BigLabel = styled.span`
  display: flex;
  align-items: center;
  gap: 5px;
  height: 24px;
`;
const Stack = styled.div`
  display: grid;
  grid-auto-rows: ${(p) => p.$row}px;
  align-content: start;
  width: ${(p) => p.$width}px;
  padding-top: ${(p) => (p.$row > 31 ? 1 : 0)}px;
`;
const ToolButton = styled.button`
  display: flex;
  align-items: center;
  gap: 3px;
  color: ${(p) => (p.disabled ? "#a3a3a3" : "#444")};
`;
const ToolIcon = styled.span`
  display: flex;
  justify-content: center;
  width: 24px;
`;
const ToolCaret = styled.span`
  margin-left: ${(p) => (p.$wide ? 6 : 2)}px;
`;
const FormatBody = styled.div`
  flex: 1;
  padding: 12px 0 0 1px;
`;
const FormatRow = styled.div`
  display: flex;
  align-items: center;
  height: 30px;
  margin-bottom: 14px;
`;
const SelectBox = styled.div`
  position: relative;
  width: ${(p) => p.$width}px;
  height: 30px;

  select {
    appearance: none;
    width: 100%;
    height: 100%;
    padding: 0 2px;
    background: #fff;
    border: 1px solid #ababab;
    border-radius: 0;
    font-size: 16px;
  }
`;
const SelectArrow = styled.span`
  position: absolute;
  right: 4px;
  top: 12px;
  pointer-events: none;
`;
const IconButton = styled.button`
  display: flex;
  align-items: center;
  justify-content: center;
  width: 30px;
  height: 30px;
  font-size: 20px;

  i {
    font-family: "Liberation Serif", serif;
    font-weight: 700;
    font-size: 22px;
  }
  u {
    font-weight: 600;
    font-size: 18px;
  }
`;
const CaretButton = styled.button`
  display: flex;
  align-items: center;
  justify-content: center;
  width: 14px;
  height: 30px;
`;
const Divider = styled.span`
  width: 1px;
  height: 22px;
  margin: 0 5px 0 4px;
  background: #d8d8d8;
`;
const CollapseButton = styled.button`
  align-self: flex-end;
  margin: 0 11px 7px auto;
`;

const Main = styled.main`
  display: flex;
  flex: 1;
  min-height: 0;
`;
const Pane = styled.aside`
  flex: none;
  width: 326px;
  margin: 0 6px 1px 4px;
  background: #fff;
  border: 1px solid #a0a4ad;
`;
const PaneHead = styled.div`
  display: flex;
  align-items: center;
  height: 49px;
  padding: 0 14px 0 5px;

  h1 {
    flex: 1;
    margin: 0;
    font-size: 31px;
    font-weight: 400;
    color: #a4373a;
    white-space: nowrap;
  }
  button + button {
    margin-left: 18px;
  }
`;
const PaneSearch = styled.div`
  display: flex;
  height: 30px;
  margin: 0 2px 3px;
  border: 1px solid #d0d0d0;

  input {
    flex: 1;
    min-width: 0;
    padding: 0 1px 4px;
    border: 0;
    font-size: 15px;
    font-style: italic;
  }
  input::placeholder {
    color: #000;
    opacity: 1;
  }
  button {
    width: 26px;
    padding-left: 4px;
    border-left: 1px solid #d0d0d0;
  }
`;
const SectionHead = styled.h2`
  display: flex;
  align-items: center;
  justify-content: space-between;
  height: 27px;
  margin: 0;
  padding: 0 16px 0 9px;
  font-size: 17px;
  font-weight: 600;
  color: #555;
`;
const NavItem = styled.button`
  display: flex;
  align-items: center;
  gap: 16px;
  width: calc(100% - 2px);
  height: 52px;
  margin: 0 1px 2px;
  padding-left: 14px;
  font-size: 15px;
  color: ${(p) => (p.$selected ? "#444" : "#666")};
  background: ${(p) => (p.$selected ? "#f7a7ab" : "none")};
`;

const Document = styled.div`
  display: flex;
  flex-direction: column;
  flex: 1;
  min-width: 0;
  border-left: 1px solid #80838c;
`;
const DocTabs = styled.div`
  display: flex;
  height: 36px;
  background: #f8f8f8;
  border-bottom: 1px solid #8f8f98;
`;
const DocTabWrap = styled.div`
  display: flex;
  position: relative;
  z-index: ${(p) => p.$order};
  height: ${(p) => (p.$order === 3 ? 36 : 35)}px;

  & + & {
    margin-left: -10px;
  }
`;
const DocTabBody = styled.button`
  display: flex;
  align-items: center;
  gap: 11px;
  padding: 0 ${(p) => (p.$active ? 0 : 10)}px 0 8px;
  background: #fff;
  border: 1px solid #8b9199;
  border-width: 1px 0 0 1px;
  border-radius: 8px 0 0 0;
  font-size: 15px;
  font-weight: ${(p) => (p.$active ? 700 : 400)};
  color: #a4373a;
`;
const CloseDoc = styled.button`
  margin: 0 12px 0 auto;
`;

const SheetWrap = styled.div`
  flex: 1;
  min-height: 0;
  overflow: hidden;
  background: #fff;
`;
const Sheet = styled.table`
  width: 100%;
  table-layout: fixed;
  border-collapse: separate;
  border-spacing: 0;
  font-size: 19px;

  th,
  td {
    height: 29px;
    padding: 0;
    border-right: 1px solid #f8f6f5;
    border-bottom: 1px solid #f7f7f7;
    line-height: 26px;
    font-weight: 400;
  }
`;
const CornerCell = styled.td`
  && {
    background: #dfe2e7;
    border-color: #dfe2e7;
  }
`;
const HeadCell = styled.th`
  && {
    background: #dfe2e7;
    border-right-color: #b0b2b8;
    border-bottom-color: #ebe8e2;
    font-style: ${(p) => (p.$italic ? "italic" : "normal")};
  }
`;
const HeadInner = styled.div`
  display: flex;
  align-items: center;
  padding-right: 8px;

  span {
    flex: 1;
    min-width: 0;
    overflow: hidden;
    white-space: nowrap;
    text-align: center;
  }
  button {
    padding-left: 6px;
  }
`;
const SpareHead = styled.td`
  && {
    background: #f6f6fe;
    border-right-color: #ebebf3;
    border-bottom-color: #f6f6fe;
  }
`;
const NewMark = styled.td`
  && {
    background: #dfe2e7;
    border-right-color: #b0b2b8;
  }
`;
const NewId = styled.td`
  && {
    padding-right: 2px;
    text-align: right;
    color: #000;
    border-bottom-color: #ece8da;
  }
`;
const BlueCell = styled.td`
  && {
    background: #a3cef1;
    border-right-color: #dcdfe0;
    border-bottom-color: #ece8da;
  }
`;
const RowMark = styled.td`
  && {
    background: #f6f6fe;
    border-color: #e9e9ef;
  }
`;

const RecordBar = styled.div`
  display: flex;
  flex: none;
  height: 29px;
  background: linear-gradient(#f4f5f7 50%, #e4e5e9 50%);
  border-top: 1px solid #9a9da5;
  border-bottom: 1px solid #b8b8b8;
  font-size: 15px;
`;
const RecordPart = styled.div`
  display: flex;
  align-items: center;
  width: ${(p) => p.$width}px;
  padding: 0 0 2px 4px;
  border-right: 1px solid #aaa;
`;
const FilterPart = styled.div`
  display: flex;
  align-items: center;
  justify-content: center;
  gap: 3px;
  width: 150px;
  padding-bottom: 2px;
  border-right: 1px solid #aaa;
  color: #888;
`;
const SearchPart = styled.div`
  display: flex;
  align-items: center;
  padding: 0 0 2px 4px;
`;
const NavArrow = styled.button`
  display: flex;
  justify-content: center;
  width: ${(p) => p.$width}px;
`;
const RecordInput = styled.input`
  width: ${(p) => p.$width}px;
  height: 24px;
  padding: 0 2px;
  border: 1px solid #999;
  background: #fff;
  color: #000;
`;

const StatusBar = styled.footer`
  display: flex;
  flex: none;
  align-items: center;
  height: 32px;
  padding: 0 1px 0 7px;
  background: #f0f0f0;
  font-size: 15px;
  color: #555;
`;
const StatusText = styled.span`
  padding-bottom: 2px;
`;
const StatusLocks = styled.div`
  display: flex;
  gap: 16px;
  margin: 0 24px 0 auto;
`;
const ViewButton = styled.button`
  display: flex;
  align-items: center;
  justify-content: center;
  width: 45px;
  height: 32px;
  background: ${(p) => (p.$active ? "#c9c9c9" : "none")};
`;

const TaskRow = styled.div`
  display: flex;
  flex: none;
  height: 60px;
  background: #1a2838;
  color: #fff;
`;
const StartButton = styled.button`
  display: flex;
  align-items: center;
  justify-content: center;
  width: 72px;
`;
const TaskSearch = styled.label`
  display: flex;
  align-items: center;
  gap: 17px;
  width: 516px;
  padding-left: 16px;
  background: #f1f1f1;
  border: 2px solid #bfbfbf;
  color: #222;
  font-size: 22px;

  input {
    flex: 1;
    min-width: 0;
    padding: 0;
    background: none;
    border: 0;
  }
  input::placeholder {
    color: #222;
    opacity: 1;
  }
`;
const TaskButton = styled.button`
  display: flex;
  align-items: center;
  justify-content: center;
  position: relative;
  width: 73px;
  margin-left: 2px;
  background: ${(p) => (p.$current ? "#4a5562" : "none")};

  &::after {
    content: "";
    position: absolute;
    left: ${(p) => (p.$current ? 0 : 6)}px;
    right: ${(p) => (p.$current ? 0 : 6)}px;
    bottom: 0;
    height: 3px;
    background: ${(p) => (p.$open ? "#76b9ed" : "none")};
  }
`;
const Tray = styled.div`
  display: flex;
  align-items: center;
  gap: 13px;
  margin-left: auto;

  svg:nth-child(n + 4) {
    margin-left: 2px;
  }
`;
const Lang = styled.span`
  margin-left: 3px;
`;
const Clock = styled.div`
  display: flex;
  flex-direction: column;
  align-items: center;
  width: 95px;
  margin-right: 7px;
  padding-top: 1px;
  line-height: 28px;
`;
const ShowDesktop = styled.button`
  align-self: stretch;
  width: 8px;
  margin-left: 16px;
  border-left: 2px solid #76808b;
`;
